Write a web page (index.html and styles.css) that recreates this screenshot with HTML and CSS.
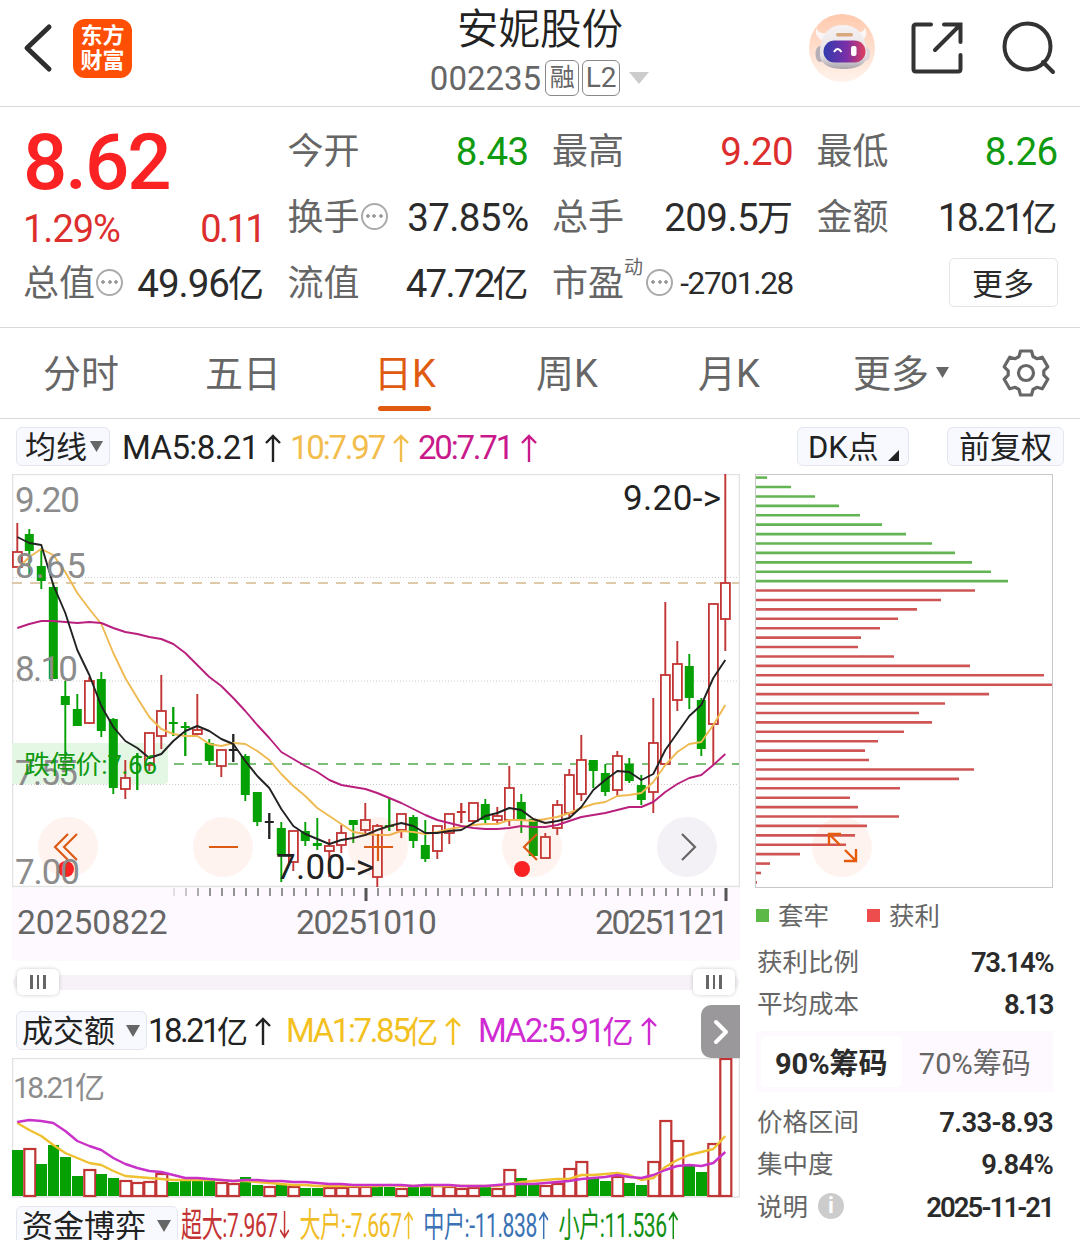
FILE: index.html
```html
<!DOCTYPE html>
<html lang="zh-CN">

<head>
    <meta charset="UTF-8">
    <meta name="viewport" content="width=device-width, initial-scale=1.0">
    <title>安妮股份 002235</title>
    <link rel="stylesheet" href="styles.css">
</head>

<body>
    <!-- 顶部导航 -->
    <header class="header">
        <div class="header-left">
            <svg class="back" width="30" height="52" viewBox="0 0 30 52">
                <path d="M26 5L4 26L26 47" />
            </svg>
            <div class="logo"><span>东方</span><span>财富</span></div>
        </div>
        <div class="header-title">
            <h1>安妮股份</h1>
            <div class="code">
                <span class="code-num">002235</span>
                <span class="tag">融</span>
                <span class="tag tag-l2">L2</span>
                <svg width="20" height="13" viewBox="0 0 20 13"><path d="M0 0H20L10 12Z" fill="#ccc" /></svg>
            </div>
        </div>
        <div class="header-right">
            <svg width="66" height="68" viewBox="0 0 66 68">
                <defs>
                    <linearGradient id="sky" x1="0" y1="0" x2="0" y2="1">
                        <stop offset="0" stop-color="#ffc9ad" />
                        <stop offset="1" stop-color="#fff3ec" />
                    </linearGradient>
                    <linearGradient id="visor" x1="0" y1="0" x2="1" y2="0">
                        <stop offset="0" stop-color="#2f3cae" />
                        <stop offset="0.55" stop-color="#7a2fa8" />
                        <stop offset="1" stop-color="#e0405c" />
                    </linearGradient>
                    <linearGradient id="shell" x1="0" y1="0" x2="0" y2="1">
                        <stop offset="0" stop-color="#f6f2f3" />
                        <stop offset="0.7" stop-color="#e6e1e4" />
                        <stop offset="1" stop-color="#aaa5ac" />
                    </linearGradient>
                </defs>
                <ellipse cx="33" cy="34" rx="33" ry="34" fill="url(#sky)" />
                <path d="M7 14Q5 24 15 27L21 18Q11 22 7 14ZM56 13Q60 23 52 27L46 18Q55 20 56 13Z" fill="#fbf6f5" />
                <ellipse cx="11" cy="40" rx="4.500" ry="8" fill="#b5afb7" />
                <ellipse cx="57" cy="40" rx="4" ry="7" fill="#dcd5da" />
                <path d="M11 38C12 20 20 11 34 11S56 20 58 38C59 50 49 55 35 55S10 51 11 38Z" fill="url(#shell)" />
                <rect x="27" y="19" width="17" height="3.500" rx="1.700" fill="#d9a77c" />
                <rect x="14.500" y="26.500" width="42" height="22" rx="11" fill="url(#visor)" />
                <path d="M25 38Q28.500 32 32.500 38" fill="none" stroke="#fff" stroke-width="2" />
                <rect x="42" y="32" width="5.500" height="10" rx="2" fill="#fff" />
            </svg>
            <svg class="line-icon share" width="52" height="52" viewBox="0 0 52 52">
                <path d="M20 2.500H5Q2.500 2.500 2.500 5V47Q2.500 49.500 5 49.500H47Q49.500 49.500 49.500 47V33" />
                <path d="M33 2.500H49.500V20M49 3L24 28" />
            </svg>
            <svg class="line-icon" width="54" height="54" viewBox="0 0 54 54">
                <circle cx="25.500" cy="25.500" r="23" />
                <path d="M41 41L51 51" />
            </svg>
        </div>
    </header>

    <!-- 行情数据 -->
    <section class="quote">
        <div class="price-box">
            <div class="price">8.62</div>
            <div class="change"><span>1.29%</span><span class="diff">0.11</span></div>
        </div>
        <div class="cell"><label>今开</label><b class="down">8.43</b></div>
        <div class="cell"><label>最高</label><b class="up">9.20</b></div>
        <div class="cell"><label>最低</label><b class="down">8.26</b></div>
        <div class="cell"><label>换手</label><i class="dots"></i><b>37.85%</b></div>
        <div class="cell"><label>总手</label><b>209.5<em>万</em></b></div>
        <div class="cell"><label>金额</label><b class="narrow">18.21<em>亿</em></b></div>
        <div class="cell"><label>总值</label><i class="dots"></i><b class="wide">49.96<em>亿</em></b></div>
        <div class="cell"><label>流值</label><b class="mid">47.72<em>亿</em></b></div>
        <div class="cell"><label>市盈</label><sup>动</sup><i class="dots"></i><b class="small">-2701.28</b></div>
        <div class="cell"><button class="more">更多</button></div>
    </section>

    <!-- 周期切换 -->
    <nav class="tabs">
        <div class="tab">分时</div>
        <div class="tab">五日</div>
        <div class="tab active">日K</div>
        <div class="tab">周K</div>
        <div class="tab">月K</div>
        <div class="tab tab-more">更多<svg width="13" height="11" viewBox="0 0 13 11"><path d="M0 0H13L6.500 11Z" fill="#666" /></svg></div>
        <div class="tab-gear">
            <svg width="48" height="50" viewBox="-24 -25 48 50">
                <path d="M7 -16.500L10.800 -14.300L16.300 -15.800L21.800 -6.200L17.800 -2.200V2.200L21.800 6.200L16.300 15.800L10.800 14.300L7 16.500L5.500 22H-5.500L-7 16.500L-10.800 14.300L-16.300 15.800L-21.800 6.200L-17.800 2.200V-2.200L-21.800 -6.200L-16.300 -15.800L-10.800 -14.300L-7 -16.500L-5.500 -22H5.500Z" />
                <circle r="7.500" />
            </svg>
        </div>
    </nav>

    <main class="main">
        <div class="left">
            <div class="bar ma-bar">
                <span class="chip">均线<svg width="13" height="11" viewBox="0 0 13 11"><path d="M0 0H13L6.500 11Z" fill="#666" /></svg></span>
                <span class="ind ma5">MA5:8.21<svg class="arrow" viewBox="0 0 16 28"><path d="M8 28V2M1 9L8 2L15 9" /></svg></span>
                <span class="ind ma10">10:7.97<svg class="arrow" viewBox="0 0 16 28"><path d="M8 28V2M1 9L8 2L15 9" /></svg></span>
                <span class="ind ma20">20:7.71<svg class="arrow" viewBox="0 0 16 28"><path d="M8 28V2M1 9L8 2L15 9" /></svg></span>
            </div>

            <!-- K线图 -->
            <svg class="kline" width="728" height="414" viewBox="12 474 728 414">
                <rect x="12.500" y="474.500" width="727" height="412" fill="none" stroke="#e2e2e2" stroke-width="1.500" />
                <g stroke="#ccc" stroke-dasharray="1 2">
                    <path d="M13 577.500H739M13 681H739M13 784.500H739" />
                </g>
                <path d="M12 583H739" stroke="#d3b88f" stroke-width="1.500" stroke-dasharray="10 8" />
                <path d="M12 764H739" stroke="#4fa94f" stroke-width="1.500" stroke-dasharray="10 8" />
                <path d="M12 743H164Q168 743 168 747V780Q168 784 164 784H12Z" fill="#e4f6e4" />
                <g id="candles"></g>
                <g id="maLines" fill="none" stroke-width="1.900" stroke-linejoin="round"></g>
                <g fill="rgba(250, 100, 50, 0.08)">
                    <circle cx="68" cy="847" r="30" />
                    <circle cx="223" cy="847" r="30" />
                    <circle cx="378" cy="847" r="30" />
                    <circle cx="532" cy="847" r="30" />
                </g>
                <circle cx="687" cy="847" r="30" fill="#f4f1f6" />
                <g fill="none" stroke="#db5a14" stroke-width="2.200">
                    <path d="M68 834L55 847L68 860M77 834L64 847L77 860" />
                    <path d="M209 847H238M364 847H393M378 834V861M537 834L524 847L537 860" />
                </g>
                <path d="M682 834L695 847L682 860" fill="none" stroke="#666" stroke-width="2.200" />
                <circle cx="66" cy="869" r="8" fill="#f92323" />
                <circle cx="522" cy="869" r="8" fill="#f92323" />
                <g class="axis-label">
                    <text x="15" y="512" textLength="65">9.20</text>
                    <text x="15" y="578" textLength="71">8.65</text>
                    <text x="15" y="681" textLength="63">8.10</text>
                    <text x="15" y="785" textLength="63">7.55</text>
                    <text x="15" y="884" textLength="65">7.00</text>
                </g>
                <text class="limit" x="24" y="774" textLength="133">跌停价:7.66</text>
                <text class="mark" x="623" y="510" textLength="98">9.20-&gt;</text>
                <text class="mark" x="276" y="879" textLength="98">7.00-&gt;</text>
            </svg>

            <!-- 时间轴 -->
            <div class="dates">
                <svg id="ticks" width="728" height="14" viewBox="12 888 728 14"></svg>
                <div class="date-row"><span>20250822</span><span>20251010</span><span>20251121</span></div>
            </div>
            <div class="slider">
                <div class="track"></div>
                <div class="handle"><i></i><i></i><i></i></div>
                <div class="handle"><i></i><i></i><i></i></div>
            </div>

            <div class="bar vol-bar">
                <span class="chip chip-vol">成交额<svg width="14" height="12" viewBox="0 0 13 11"><path d="M0 0H13L6.500 11Z" fill="#666" /></svg></span>
                <span class="ind v0">18.21<em>亿</em><svg class="arrow" viewBox="0 0 16 28"><path d="M8 28V2M1 9L8 2L15 9" /></svg></span>
                <span class="ind v1">MA1:7.85<em>亿</em><svg class="arrow" viewBox="0 0 16 28"><path d="M8 28V2M1 9L8 2L15 9" /></svg></span>
                <span class="ind v2">MA2:5.91<em>亿</em><svg class="arrow" viewBox="0 0 16 28"><path d="M8 28V2M1 9L8 2L15 9" /></svg></span>
                <span class="next"><svg width="16" height="26" viewBox="0 0 16 26"><path d="M3 3L13 13L3 23" /></svg></span>
            </div>
            <svg class="volume" width="728" height="140" viewBox="12 1058 728 140">
                <path d="M12.500 1197V1058.500H739.500V1197Z" fill="none" stroke="#e2e2e2" stroke-width="1.500" />
                <g id="volBars"></g>
                <g id="volLines" fill="none" stroke-width="2.400" stroke-linejoin="round"></g>
                <text class="vol-label" x="13" y="1098" textLength="92">18.21亿</text>
            </svg>

            <div class="bar flow-bar">
                <span class="chip chip-flow">资金博弈<svg width="14" height="12" viewBox="0 0 13 11"><path d="M0 0H13L6.500 11Z" fill="#666" /></svg></span>
                <div class="flows">
                    <span class="f1">超大:7.967<svg class="arrow" viewBox="0 0 16 28"><path d="M8 0V26M1 19L8 26L15 19" /></svg></span>
                    <span class="f2">大户:-7.667<svg class="arrow" viewBox="0 0 16 28"><path d="M8 28V2M1 9L8 2L15 9" /></svg></span>
                    <span class="f3">中户:-11.838<svg class="arrow" viewBox="0 0 16 28"><path d="M8 28V2M1 9L8 2L15 9" /></svg></span>
                    <span class="f4">小户:11.536<svg class="arrow" viewBox="0 0 16 28"><path d="M8 28V2M1 9L8 2L15 9" /></svg></span>
                </div>
            </div>
        </div>

        <!-- 筹码分布 -->
        <aside class="right">
            <div class="bar right-bar">
                <span class="chip chip-dk">DK点<svg width="11" height="11" viewBox="0 0 11 11"><path d="M11 0V11H0Z" fill="#222" /></svg></span>
                <span class="chip chip-fq">前复权</span>
            </div>
            <svg class="chips-chart" width="300" height="414" viewBox="754 474 300 414">
                <rect x="755.500" y="474.500" width="297" height="413" fill="none" stroke="#c8c8c8" />
                <g id="chipBars" stroke-width="2.600"></g>
                <circle cx="842" cy="847" r="30" fill="rgba(250, 100, 50, 0.08)" />
                <path d="M829 845V834H841M829 834L840 845M845 850L856 861M844 861H856V849" fill="none" stroke="#e65a0c" stroke-width="2.400" />
            </svg>
            <div class="legend">
                <span class="lg-green">套牢</span><span class="lg-red">获利</span>
            </div>
            <div class="row"><span>获利比例</span><b>73.14%</b></div>
            <div class="row"><span>平均成本</span><b>8.13</b></div>
            <div class="switch"><span class="on">90%筹码</span><span>70%筹码</span></div>
            <div class="row r3"><span>价格区间</span><b class="range">7.33-8.93</b></div>
            <div class="row r3"><span>集中度</span><b class="range">9.84%</b></div>
            <div class="row r3"><span>说明<i class="info">i</i></span><b class="day">2025-11-21</b></div>
        </aside>
    </main>

    <script src="chart.js"></script>
</body>

</html>
```
FILE: styles.css
```css
* {
    box-sizing: border-box;
}

body {
    margin: 0;
    width: 1080px;
    height: 1240px;
    overflow: hidden;
    background-color: #fff;
    color: #2b2b2b;
    font-family: Roboto, "Noto Sans CJK SC", sans-serif;
}

svg {
    display: block;
    flex: none;
}

em,
i {
    font-style: normal;
}

/* 顶部导航 */
.header {
    display: grid;
    grid-template-columns: 1fr auto 1fr;
    height: 107px;
    border-bottom: 1px solid #d9d9d9;
}

.header-left {
    display: flex;
    align-items: center;
    height: 96px;
    padding-left: 23px;
}

.back {
    fill: none;
    stroke: #2e2e2e;
    stroke-width: 5;
    stroke-linecap: round;
    stroke-linejoin: round;
}

.logo {
    display: flex;
    flex-direction: column;
    align-items: center;
    justify-content: center;
    width: 59px;
    height: 59px;
    margin-left: 20px;
    border-radius: 12px;
    background-color: #ff4f05;
    color: #fff;
    font-size: 22px;
    font-weight: 700;
    line-height: 25px;
}

.header-title h1 {
    margin: 6px 0 0;
    font-size: 41.5px;
    font-weight: 350;
    line-height: 48px;
    text-align: center;
    color: #222;
}

.code {
    display: flex;
    align-items: center;
    height: 44px;
    margin-top: 2px;
    color: #666;
}

.code-num {
    font-size: 33px;
    margin: 0 4px 0 -1px;
}

.tag {
    width: 34px;
    height: 36px;
    margin-right: 3px;
    border: 1.5px solid #888;
    border-radius: 6px;
    font-size: 25px;
    line-height: 34px;
    text-align: center;
}

.tag-l2 {
    width: 38px;
    margin-right: 9px;
    font-size: 28px;
}

.header-right {
    display: flex;
    align-items: center;
    justify-content: flex-end;
    height: 96px;
    padding-right: 24px;
}

.line-icon {
    fill: none;
    stroke: #333;
    stroke-width: 4;
    stroke-linecap: round;
}

.share {
    margin: 0 39px 0 36px;
}

/* 行情数据 */
.quote {
    display: grid;
    grid-template-columns: repeat(4, 241px);
    grid-template-rows: repeat(3, 66px);
    column-gap: 23.5px;
    height: 221px;
    padding: 12px 0 0 23px;
    border-bottom: 1px solid #d9d9d9;
}

.price-box {
    grid-row: span 2;
}

.price {
    height: 85px;
    font-size: 78px;
    font-weight: 500;
    line-height: 87px;
    letter-spacing: -2px;
    color: #fa2222;
}

.change {
    display: flex;
    justify-content: space-between;
    font-size: 38px;
    line-height: 51px;
    letter-spacing: -1px;
    color: #dd2e2e;
}

.change .diff {
    letter-spacing: -2.6px;
}

.cell {
    display: flex;
    align-items: center;
}

.cell label {
    font-size: 36px;
    line-height: 52px;
    color: #666;
}

.cell b {
    margin-left: auto;
    font-size: 38.5px;
    font-weight: 400;
    line-height: 52px;
    letter-spacing: -0.6px;
    white-space: nowrap;
}

.cell b em {
    margin-left: -1px;
    font-size: 36px;
    line-height: 0;
    letter-spacing: 0;
}

.cell b.wide {
    letter-spacing: -1px;
}

.cell b.mid {
    letter-spacing: -1.8px;
}

.cell b.narrow {
    letter-spacing: -2.4px;
}

.cell b.small {
    font-size: 31.5px;
    letter-spacing: -1.3px;
}

.cell b.up {
    color: #dd2e2e;
}

.cell b.down {
    color: #0f9a0f;
}

.cell sup {
    align-self: flex-start;
    margin: 1px 2px 0 0;
    font-size: 19px;
    color: #666;
}

.dots {
    width: 27px;
    height: 27px;
    flex: none;
    margin: 0 0 4px 1px;
    border: 2px solid #aaa;
    border-radius: 50%;
    background: radial-gradient(circle, #999 1.5px, transparent 2px) center / 6px 6px no-repeat,
        radial-gradient(circle, #999 1.5px, transparent 2px) 2px center / 6px 6px no-repeat,
        radial-gradient(circle, #999 1.5px, transparent 2px) 15px center / 6px 6px no-repeat;
}

.more {
    width: 109px;
    height: 49px;
    margin: 0 0 3px auto;
    padding: 0 0 7px;
    border: 1.5px solid #e4e4e8;
    border-radius: 5px;
    background-color: #fff;
    color: #2b2b2b;
    font-family: inherit;
    font-size: 31px;
}

/* 周期切换 */
.tabs {
    display: flex;
    height: 91px;
    border-bottom: 1px solid #d9d9d9;
    color: #666;
}

.tab {
    display: flex;
    align-items: center;
    justify-content: center;
    position: relative;
    width: 162px;
    padding-bottom: 5px;
    font-size: 38px;
}

.tab.active {
    color: #e05a10;
}

.tab.active::after {
    content: "";
    position: absolute;
    left: 54px;
    bottom: 7px;
    width: 53px;
    height: 5px;
    border-radius: 3px;
    background-color: #e05a10;
}

.tab-more {
    padding-left: 20px;
}

.tab-more svg {
    margin: 4px 0 0 7px;
}

.tab-gear {
    display: flex;
    align-items: center;
    justify-content: center;
    width: 108px;
}

.tab-gear svg {
    fill: none;
    stroke: #666;
    stroke-width: 3.2;
    stroke-linejoin: round;
}

/* 主体 */
.main {
    display: grid;
    grid-template-columns: 740px 340px;
}

.left {
    padding-left: 12px;
}

.bar {
    display: flex;
    align-items: center;
    height: 55px;
    padding-left: 4px;
    white-space: nowrap;
}

.chip {
    display: flex;
    align-items: center;
    flex: none;
    width: 94px;
    height: 39px;
    padding: 2px 0 0 8px;
    border: 1.5px solid #e3e6ee;
    border-radius: 6px;
    background-color: #f7f9fe;
    font-size: 31px;
    line-height: 36px;
    color: #222;
}

.chip svg {
    margin: -2px 0 0 3px;
}

.ind {
    display: flex;
    align-items: center;
    font-size: 33px;
}

.ma-bar .ind {
    padding-top: 2px;
}

.arrow {
    width: 16px;
    height: 28px;
    fill: none;
    stroke: currentColor;
    stroke-width: 2.4;
}

.ma5 {
    width: 168px;
    padding-left: 12px;
    letter-spacing: -0.6px;
    color: #222;
}

.ma5 .arrow {
    margin-left: 6px;
}

.ma10 {
    width: 128px;
    padding-left: 12px;
    letter-spacing: -2.2px;
    color: #f2bd4c;
}

.ma10 .arrow,
.ma20 .arrow {
    margin-left: 9px;
}

.ma20 {
    padding-left: 12px;
    letter-spacing: -2.2px;
    color: #c9198a;
}

.kline text,
.volume text {
    font-size: 35px;
}

.kline .axis-label {
    fill: #8c8c8c;
}

.kline .limit {
    font-size: 26px;
    fill: #0f9a0f;
}

.mark {
    fill: #222;
}

.volume .vol-label {
    font-size: 30px;
    fill: #8c8c8c;
}

.dates {
    height: 73px;
    background-color: #fdf9fe;
}

.date-row {
    display: grid;
    grid-template-columns: 279px 299px auto;
    padding-left: 5px;
    font-size: 33.5px;
    line-height: 42px;
    color: #666;
}

.date-row span:nth-child(2) {
    letter-spacing: -1.4px;
}

.date-row span:nth-child(3) {
    letter-spacing: -2.4px;
}

.slider {
    display: flex;
    justify-content: space-between;
    align-items: center;
    position: relative;
    height: 42px;
    padding: 0 5px;
}

.track {
    position: absolute;
    left: 1px;
    right: 1px;
    top: 14px;
    height: 15px;
    border-radius: 8px;
    background-color: #f6f2f7;
}

.handle {
    display: flex;
    align-items: center;
    justify-content: center;
    gap: 4px;
    position: relative;
    width: 42px;
    height: 26px;
    border-radius: 6px;
    background-color: #fff;
    box-shadow: 0 0 4px rgba(0, 0, 0, 0.2);
}

.handle i {
    width: 2.5px;
    height: 14px;
    background-color: #666;
}

.vol-bar .chip-vol {
    width: 131px;
    padding-left: 5px;
}

.chip-vol svg,
.chip-flow svg {
    margin-left: 11px;
}

.ind em {
    font-size: 31px;
    margin: -2px 0 0 -1px;
    letter-spacing: 0;
}

.v0 {
    width: 138px;
    padding-left: 1px;
    letter-spacing: -2.6px;
    color: #222;
}

.v1 {
    width: 192px;
    padding-left: 1px;
    letter-spacing: -2.4px;
    color: #f3c11f;
}

.v2 {
    padding-left: 1px;
    letter-spacing: -2px;
    color: #d02bd3;
}

.v0 .arrow,
.v1 .arrow,
.v2 .arrow {
    margin-left: 7px;
}

.next {
    display: flex;
    align-items: center;
    justify-content: center;
    width: 39px;
    height: 53px;
    margin: 2px 0 0 auto;
    border-radius: 10px 0 0 10px;
    background-color: #9a989b;
}

.next svg {
    fill: none;
    stroke: #fff;
    stroke-width: 4;
    stroke-linecap: round;
    stroke-linejoin: round;
}

.flow-bar {
    align-items: flex-start;
    padding-top: 8px;
}

.flow-bar .chip-flow {
    width: 162px;
    padding-left: 5px;
}

.flows {
    display: flex;
    gap: 16px;
    margin-left: 3px;
    font-size: 34px;
    line-height: 38px;
    letter-spacing: -0.7px;
    transform: scaleX(0.62);
    transform-origin: 0 0;
}

.flows span {
    display: flex;
    align-items: center;
}

.flows .arrow {
    margin-left: 3px;
}

.f1 {
    color: #c43434;
}

.f2 {
    color: #f0bd26;
}

.f3 {
    color: #3a72b5;
}

.f4 {
    color: #129012;
}

/* 筹码分布 */
.right {
    padding-left: 14px;
}

.right-bar {
    padding: 0 16px 0 43px;
    justify-content: space-between;
}

.right-bar .chip-dk {
    width: 112px;
    padding-left: 10px;
}

.chip-dk svg {
    margin: 15px 0 0 9px;
}

.right-bar .chip-fq {
    width: 117px;
    padding-left: 11px;
}

.legend {
    display: flex;
    height: 53px;
    padding: 2px 0 0 2px;
    font-size: 25.5px;
    line-height: 50px;
    color: #666;
}

.legend span {
    display: flex;
    align-items: center;
    width: 111px;
}

.legend span::before {
    content: "";
    width: 13px;
    height: 13px;
    margin-right: 9px;
    background-color: #5cb947;
}

.legend .lg-red::before {
    background-color: #ee4d4d;
}

.row {
    display: flex;
    align-items: center;
    justify-content: space-between;
    width: 299px;
    height: 42px;
    padding-left: 3px;
    font-size: 25.5px;
    color: #666;
}

.row span {
    display: flex;
    align-items: center;
    margin-bottom: 6px;
}

.row b {
    font-size: 27.5px;
    font-weight: 600;
    letter-spacing: -1.5px;
    color: #2b2b2b;
}

.row b.range {
    letter-spacing: -0.7px;
}

.row b.day {
    letter-spacing: -1.9px;
}

.switch {
    display: flex;
    width: 297px;
    height: 61px;
    margin: 6px 0 9px 2px;
    padding: 5px;
    background-color: #fdf9fe;
    font-size: 29px;
    line-height: 57px;
    text-align: center;
    color: #666;
}

.switch span {
    width: 148px;
}

.switch .on {
    width: 142px;
    height: 51px;
    border-radius: 5px;
    background-color: #fff;
    font-weight: 700;
    color: #2b2b2b;
}

.row.r3 {
    height: 42.5px;
}

.info {
    width: 26px;
    height: 26px;
    margin: 4px 0 0 10px;
    border-radius: 50%;
    background-color: #ccc;
    color: #fff;
    font-size: 22px;
    font-weight: 700;
    line-height: 26px;
    text-align: center;
}
```
FILE: chart.js
```js
const X0 = 17.3;
const STEP = 12;
const RED = '#c23535';
const GREEN = '#04a004';

// 每根K线: [最高, 实体上沿, 实体下沿, 最低, 颜色]  r涨 g跌 k平
const candles = [
    [523, 552, 567, 567, 'r'], [529, 534, 551, 575, 'g'], [548, 566, 581, 589, 'g'], [583, 587, 679, 679, 'g'],
    [681, 696, 705, 772, 'g'], [694, 709, 726, 726, 'g'], [677, 681, 723, 724, 'r'], [672, 679, 731, 737, 'g'],
    [718, 719, 788, 794, 'g'], [760, 778, 789, 799, 'r'], [753, 757, 758, 790, 'g'], [733, 733, 765, 771, 'r'],
    [675, 711, 736, 749, 'r'], [707, 723, 724, 736, 'g'], [722, 727, 728, 756, 'g'], [694, 730, 734, 735, 'r'],
    [739, 743, 761, 765, 'g'], [750, 750, 766, 777, 'r'], [734, 750, 751, 762, 'k'], [754, 756, 795, 801, 'g'],
    [792, 792, 822, 826, 'g'], [813, 822, 823, 839, 'k'], [822, 828, 855, 882, 'g'], [831, 831, 862, 871, 'r'],
    [822, 831, 841, 846, 'g'], [818, 843, 846, 850, 'g'], [839, 846, 851, 877, 'r'], [825, 833, 845, 853, 'r'],
    [820, 820, 825, 843, 'g'], [803, 820, 830, 836, 'r'], [824, 826, 877, 887, 'r'], [798, 826, 827, 831, 'g'],
    [814, 814, 830, 838, 'r'], [815, 817, 841, 848, 'g'], [820, 845, 859, 862, 'g'], [826, 826, 851, 859, 'r'],
    [814, 814, 833, 844, 'r'], [803, 812, 813, 823, 'r'], [803, 803, 821, 823, 'r'], [799, 804, 820, 823, 'g'],
    [807, 816, 820, 823, 'r'], [766, 788, 820, 826, 'r'], [794, 802, 820, 833, 'g'], [818, 819, 856, 857, 'g'],
    [833, 837, 858, 858, 'r'], [800, 805, 828, 835, 'r'], [769, 775, 813, 818, 'r'], [735, 760, 794, 801, 'r'],
    [760, 760, 771, 788, 'g'], [764, 773, 792, 796, 'g'], [751, 756, 790, 797, 'r'], [758, 764, 781, 783, 'g'],
    [775, 785, 800, 805, 'g'], [698, 743, 792, 813, 'r'], [602, 675, 764, 764, 'r'], [641, 664, 700, 711, 'r'],
    [654, 666, 698, 709, 'g'], [698, 700, 749, 756, 'g'], [604, 604, 724, 765, 'r'], [474, 583, 619, 651, 'r']
];

const ma5 = [537, 543, 545, 585, 613, 650, 675, 706, 727, 741, 748, 758, 754, 741, 731, 726, 731, 739, 744, 761,
    776, 788, 809, 826, 834, 839, 844, 840, 838, 835, 830, 826, 823, 826, 833, 833, 831, 830, 823, 816,
    813, 808, 810, 819, 823, 821, 818, 807, 790, 780, 771, 772, 780, 774, 750, 733, 716, 705, 678, 660];
const ma10 = [569, 557, 549, 555, 572, 593, 609, 624, 653, 678, 698, 717, 729, 734, 736, 736, 744, 746, 743, 744,
    751, 760, 774, 786, 796, 808, 816, 824, 832, 834, 835, 835, 831, 832, 834, 832, 829, 827, 825, 824,
    824, 820, 820, 821, 819, 817, 813, 808, 804, 802, 796, 795, 793, 782, 765, 752, 744, 742, 725, 705];
const ma20 = [628, 624, 621, 621, 622, 623, 622, 623, 628, 632, 634, 637, 639, 644, 653, 665, 677, 686, 698, 711,
    725, 738, 752, 759, 766, 772, 780, 785, 787, 789, 793, 798, 803, 809, 815, 820, 823, 826, 828, 829,
    829, 828, 826, 827, 827, 825, 821, 817, 815, 813, 810, 807, 807, 802, 792, 784, 778, 775, 765, 754];

// 成交额柱顶位置
const volume = [1150, 1148, 1164, 1145, 1157, 1176, 1169, 1174, 1178, 1180, 1182, 1181, 1173, 1182, 1181, 1181, 1181, 1182, 1183, 1177,
    1185, 1186, 1184, 1186, 1188, 1188, 1187, 1187, 1186, 1186, 1187, 1187, 1188, 1187, 1187, 1185, 1186, 1188, 1187, 1187,
    1188, 1169, 1178, 1184, 1185, 1183, 1168, 1161, 1178, 1181, 1176, 1183, 1185, 1161, 1120, 1140, 1166, 1172, 1143, 1058];
const volColors = 'grgggg' + 'rggrrrrgggg' + 'rrggrgrggrrrrggrggrrrrgrrggrrrrggrggrrrggrr';
const vma5 = [1123, 1130, 1136, 1145, 1153, 1158, 1163, 1165, 1171, 1176, 1177, 1178, 1179, 1180, 1180, 1180, 1180, 1180, 1181, 1181,
    1182, 1183, 1184, 1185, 1185, 1186, 1186, 1186, 1186, 1186, 1186, 1185, 1186, 1186, 1186, 1186, 1186, 1186, 1186, 1186,
    1186, 1184, 1182, 1181, 1180, 1179, 1179, 1175, 1175, 1174, 1173, 1175, 1180, 1178, 1167, 1160, 1155, 1152, 1149, 1136];
const vma10 = [1122, 1120, 1121, 1123, 1131, 1141, 1146, 1150, 1158, 1164, 1168, 1171, 1172, 1175, 1178, 1178, 1179, 1180, 1181, 1180,
    1180, 1181, 1181, 1182, 1182, 1183, 1184, 1184, 1185, 1185, 1185, 1185, 1185, 1186, 1185, 1185, 1185, 1186, 1186, 1186,
    1185, 1184, 1184, 1184, 1183, 1182, 1181, 1179, 1178, 1177, 1175, 1177, 1178, 1175, 1170, 1166, 1165, 1166, 1163, 1152];

// 筹码分布每行右端
const chips = [767, 791, 815, 839, 860, 882, 906, 932, 955, 972, 991, 1008,
    975, 941, 917, 898, 880, 861, 858, 894, 970, 1044, 1052, 989, 945, 919, 932, 904, 878, 865, 869, 974,
    959, 900, 850, 858, 899, 867, 855, 846, 800, 770, 761, 757];

function line(data, color) {
    const pts = data.map((y, i) => (X0 + i * STEP) + ',' + y).join(' ');
    return '<polyline points="' + pts + '" stroke="' + color + '"/>';
}

// 画K线
let html = '';
candles.forEach(function (c, i) {
    const x = X0 + i * STEP;
    const color = { r: RED, g: GREEN, k: '#222' }[c[4]];
    html += '<path d="M' + x + ' ' + c[0] + 'V' + c[1] + 'M' + x + ' ' + c[2] + 'V' + c[3] + '" stroke="' + color + '" stroke-width="1.9"/>';
    if (c[2] - c[1] <= 1) {
        html += '<path d="M' + (x - 4.5) + ' ' + c[1] + 'h9M' + x + ' ' + c[0] + 'V' + c[3] + '" stroke="' + color + '" stroke-width="1.9"/>';
    } else if (c[4] === 'r') {
        html += '<rect x="' + (x - 4.4) + '" y="' + c[1] + '" width="9" height="' + (c[2] - c[1]) + '" fill="#fff" stroke="' + color + '" stroke-width="1.8"/>';
    } else {
        html += '<rect x="' + (x - 4.5) + '" y="' + c[1] + '" width="9" height="' + (c[2] - c[1]) + '" fill="' + color + '"/>';
    }
});
document.getElementById('candles').innerHTML = html;
document.getElementById('maLines').innerHTML = line(ma10, '#efba52') + line(ma20, '#b9207e') + line(ma5, '#222');

// 时间刻度
html = '';
for (let i = 13; i < 60; i++) {
    const big = i === 29 || i === 59;
    html += '<path d="M' + (X0 + 0.7 + i * STEP) + ' 888v' + (big ? 13 : 8) + '" stroke="' + (big ? '#555' : '#888') +
        '" stroke-width="' + (big ? 3 : 1.8) + '" opacity="' + Math.min(1, (i - 12) / 4) + '"/>';
}
document.getElementById('ticks').innerHTML = html;

// 成交额
html = '';
volume.forEach(function (y, i) {
    const x = X0 + i * STEP;
    if (volColors[i] === 'r') {
        html += '<rect x="' + (x - 5) + '" y="' + (y + 1) + '" width="11" height="' + (1195 - y) + '" fill="#fff" stroke="' + RED + '" stroke-width="2.2"/>';
    } else {
        html += '<rect x="' + (x - 5.3) + '" y="' + y + '" width="11" height="' + (1196 - y) + '" fill="' + GREEN + '"/>';
    }
});
document.getElementById('volBars').innerHTML = html;
document.getElementById('volLines').innerHTML = line(vma5, '#efc030') + line(vma10, '#c832c8');

// 筹码分布
html = '';
chips.forEach(function (x, i) {
    const y = 477.6 + i * 9.414;
    html += '<path d="M756 ' + y + 'H' + x + '" stroke="' + (i < 12 ? '#62b552' : '#cf5454') + '"/>';
});
document.getElementById('chipBars').innerHTML = html;
```
